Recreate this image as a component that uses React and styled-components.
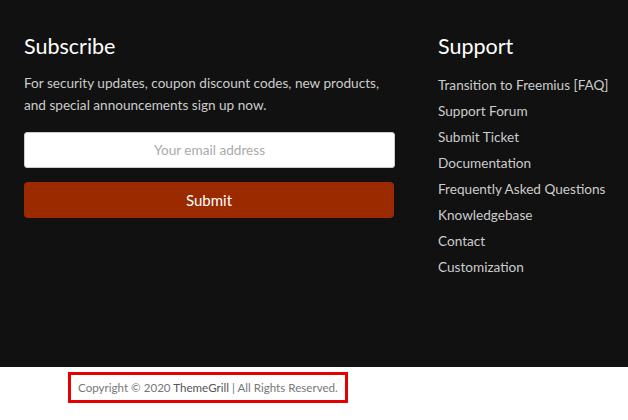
import React from "react";
import styled, { createGlobalStyle } from "styled-components";

const GlobalStyle = createGlobalStyle`
  html, body {
    margin: 0;
    padding: 0;
    background: #fff;
  }
  body {
    font-family: Lato, "Liberation Sans", sans-serif;
  }
`;

const supportLinks = [
    "Transition to Freemius [FAQ]",
    "Support Forum",
    "Submit Ticket",
    "Documentation",
    "Frequently Asked Questions",
    "Knowledgebase",
    "Contact",
    "Customization",
];

const App = () => {
    return (
        <>
            <GlobalStyle />
            <FooterWidgets>
                <Column>
                    <WidgetTitle>Subscribe</WidgetTitle>
                    <WidgetText>
                        For security updates, coupon discount codes, new products,
                        and special announcements sign up now.
                    </WidgetText>
                    <SubscribeForm onSubmit={(ev) => ev.preventDefault()}>
                        <EmailInput type="email" placeholder="Your email address" />
                        <SubmitButton type="submit">Submit</SubmitButton>
                    </SubscribeForm>
                </Column>
                <Column>
                    <WidgetTitle>Support</WidgetTitle>
                    <LinkList>
                        {supportLinks.map((link) => (
                            <li key={link}>
                                <LinkItem href="#">{link}</LinkItem>
                            </li>
                        ))}
                    </LinkList>
                </Column>
            </FooterWidgets>
            <BottomBar>
                <Copyright>
                    Copyright © 2020 <Brand href="#">ThemeGrill</Brand> | All Rights Reserved.
                </Copyright>
            </BottomBar>
        </>
    );
};

export default App;

// Dark widget area
const FooterWidgets = styled.footer`
  background: #111111;
  height: 367px;
  box-sizing: border-box;
  padding: 30px 0 0 24px;
  display: grid;
  grid-template-columns: 371px 1fr;
  column-gap: 43px;
`;

const Column = styled.div`
  display: flex;
  flex-direction: column;
`;

const WidgetTitle = styled.h3`
  margin: 0 0 10px;
  font-size: 21.5px;
  line-height: 32px;
  font-weight: 400;
  color: #ffffff;
`;

const WidgetText = styled.p`
  margin: 0 0 16px;
  font-size: 13.6px;
  line-height: 22px;
  color: #cccccc;
`;

const SubscribeForm = styled.form`
  display: flex;
  flex-direction: column;
  gap: 14px;
`;

const EmailInput = styled.input`
  box-sizing: border-box;
  height: 36px;
  width: 100%;
  border: 1px solid #cccccc;
  border-radius: 3px;
  background: #ffffff;
  text-align: center;
  font-family: inherit;
  font-size: 13.6px;
  color: #333;

  &::placeholder {
    color: #aaaaaa;
  }
`;

const SubmitButton = styled.button`
  height: 36px;
  width: 370px;
  border: none;
  border-radius: 4px;
  background: #9b2a00;
  color: #ffffff;
  font-family: inherit;
  font-size: 15px;
  cursor: pointer;
`;

const LinkList = styled.ul`
  list-style: none;
  margin: 0;
  padding: 0;
  display: flex;
  flex-direction: column;
`;

const LinkItem = styled.a`
  display: block;
  font-size: 13.6px;
  line-height: 26px;
  color: #cccccc;
  text-decoration: none;
`;

// White copyright strip
const BottomBar = styled.div`
  background: #ffffff;
  padding: 5px 0 0 68px;
`;

const Copyright = styled.div`
  display: inline-block;
  border: 3px solid #e60000;
  padding: 5px 7px 4px;
  font-size: 11.6px;
  line-height: 16px;
  color: #777777;
`;

const Brand = styled.a`
  color: #555555;
  text-decoration: none;
`;
